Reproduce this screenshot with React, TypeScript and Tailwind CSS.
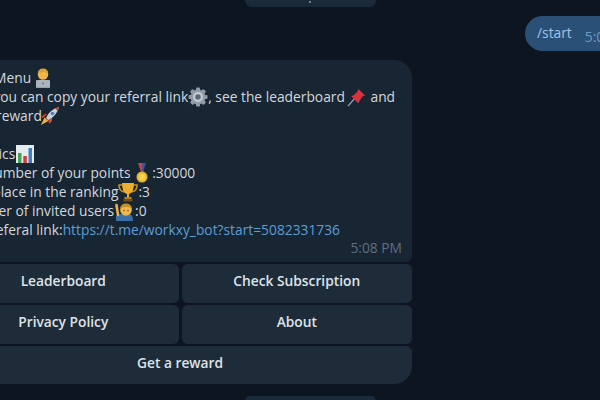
import React from 'react';

const emojiClass = 'inline-block w-[20px] h-[20px] -my-[4px] align-[-1px]';

const Technologist = () => (
  <svg viewBox="0 0 20 20" className={`${emojiClass} ml-[-2px]`}>
    <path d="M3 20 V15 Q3 12 7 12 H13 Q17 12 17 15 V20 Z" fill="#7d8d9b" />
    <circle cx="10" cy="6.500" r="5.200" fill="#f0b64c" />
    <path d="M4.800 6 Q4.800 0.500 10 0.500 Q15.200 0.500 15.200 6 Q12.500 4 10 4 Q7.500 4 4.800 6Z" fill="#d9a13a" />
    <rect x="3" y="12" width="14" height="7.500" rx="1" fill="#a9b4bd" />
    <circle cx="10" cy="15.500" r="1" fill="#6f7c88" />
  </svg>
);

const Gear = () => (
  <svg viewBox="0 0 20 20" className={emojiClass}>
    <g fill="#8f9ba5">
      <circle cx="10" cy="10" r="7.500" />
      <rect x="8" y="0.500" width="4" height="19" rx="1" />
      <rect x="8" y="0.500" width="4" height="19" rx="1" transform="rotate(45 10 10)" />
      <rect x="8" y="0.500" width="4" height="19" rx="1" transform="rotate(90 10 10)" />
      <rect x="8" y="0.500" width="4" height="19" rx="1" transform="rotate(135 10 10)" />
    </g>
    <circle cx="10" cy="10" r="5" fill="#c4ccd2" />
    <circle cx="10" cy="10" r="2.800" fill="#5d6a76" />
  </svg>
);

const Pin = () => (
  <svg viewBox="0 0 20 20" className={`${emojiClass} ml-[2px]`}>
    <path d="M1 19 L8.500 10.500" stroke="#8a97a3" strokeWidth="1.400" />
    <path d="M11.500 2 L18 8.500 L15.500 9.500 L12.500 14 Q12.500 15.500 11 16 L4.500 9.500 Q5.500 8 7 8 L10.500 4.500 Z" fill="#d8333c" />
  </svg>
);

const Rocket = () => (
  <svg viewBox="0 0 20 20" className={`${emojiClass} ml-[-2px]`}>
    <path d="M1 19 L4.500 11.500 L8.500 15 Z" fill="#f2b233" />
    <path d="M3 12 L7 8 L5 8 L1 11 Z M8 13 L12 9 L12 15 L9 18Z" fill="#d8452f" />
    <path d="M6 12 Q9 4 19 1 Q16 11 8 14 Z" fill="#c9d0d6" />
    <path d="M19 1 Q17.500 1.500 15 2.500 L17.500 5 Q18.500 3 19 1Z" fill="#d8452f" />
    <circle cx="12.500" cy="7.500" r="1.800" fill="#4e85b8" />
  </svg>
);

const Chart = () => (
  <svg viewBox="0 0 20 20" className={emojiClass}>
    <rect x="1" y="1" width="18" height="18" fill="#e6ebee" />
    <rect x="3" y="9" width="3.500" height="10" fill="#3fa35a" />
    <rect x="8.300" y="12" width="3.500" height="7" fill="#cf3b3b" />
    <rect x="13.500" y="4" width="3.500" height="15" fill="#3d7fc4" />
  </svg>
);

const Medal = () => (
  <svg viewBox="0 0 20 20" className={`${emojiClass} ml-[-2px]`}>
    <path d="M6 0 H10 L11.500 9 H9 Z" fill="#c9463f" />
    <path d="M14 0 H10 L9.500 9 H11 Z" fill="#46549f" />
    <circle cx="10" cy="14" r="5.500" fill="#e8b72f" />
    <circle cx="10" cy="14" r="3.200" fill="#f5d253" />
  </svg>
);

const Trophy = () => (
  <svg viewBox="0 0 20 20" className={emojiClass}>
    <path d="M4.500 3 H1 Q1 9 6 10 M15.500 3 H19 Q19 9 14 10" fill="none" stroke="#c98f22" strokeWidth="1.600" />
    <path d="M4 1 H16 Q16 11 11 12 V15 H9 V12 Q4 11 4 1Z" fill="#ecae2c" />
    <rect x="6.500" y="15" width="7" height="2" fill="#b97f1f" />
    <rect x="5.500" y="17" width="9" height="2.500" fill="#74491c" />
  </svg>
);

const RaisingHand = () => (
  <svg viewBox="0 0 20 20" className={`${emojiClass} ml-[1px]`}>
    <path d="M1 20 V16 Q1 13 6 13 H14 Q18 13 18 20 Z" fill="#3d6fa8" />
    <path d="M3 14 L1.500 4" stroke="#eab04a" strokeWidth="2.600" strokeLinecap="round" />
    <circle cx="11" cy="9" r="5.800" fill="#eeb84e" />
    <path d="M5 8 Q5.500 2.500 11 2.500 Q16.500 2.500 17 8 Q14 5.500 11 6 Q7.500 6 5 8Z" fill="#c98f2e" />
    <circle cx="9" cy="9.500" r="0.700" fill="#5a3a14" />
    <circle cx="13" cy="9.500" r="0.700" fill="#5a3a14" />
  </svg>
);

const KeyboardButton = ({ label, rounded = 'rounded-md' }: { label: string; rounded?: string }) => (
  <button className={`flex-1 min-w-0 flex items-center justify-center pb-[5px] bg-[#1e2c3a] text-[#dfe3e7] font-semibold text-[13.75px] ${rounded}`}>
    {label}
  </button>
);

const Line = ({ children }: { children: React.ReactNode }) => (
  <p className="h-[19px] whitespace-nowrap">{children}</p>
);

export default function App() {
  return (
    <div
      className="w-[600px] h-[400px] overflow-hidden bg-[#0d1620] flex flex-col text-[13.8px] leading-[19px] text-[#d3d8dc]"
      style={{ fontFamily: '"Open Sans", "Noto Sans", sans-serif' }}
    >
      {/* date pill cut off by the top edge */}
      <div className="h-[7px] shrink-0 flex justify-center overflow-hidden">
        <div className="w-[131px] h-[7px] ml-[20px] bg-[#1b2a38] rounded-b-[9px] flex items-end justify-center">
          <span className="block w-[2px] h-[2px] mb-[4px] rounded-full bg-[#8d9aa5]" />
        </div>
      </div>

      {/* outgoing message */}
      <div className="h-[35px] mt-[9px] shrink-0 flex justify-end mr-[-48px]">
        <div className="w-[123px] bg-[#2a5078] rounded-[18px] pl-[12px] flex items-center gap-[13px] text-[#a2c4e4]">
          <span className="mt-[-3px]">/start</span>
          <span className="mt-[6px] text-[#6f9ac0]">5:08 PM</span>
        </div>
      </div>

      {/* bot message with its keyboard */}
      <div className="w-[464px] ml-[-52px] mt-[9px] shrink-0 flex flex-col gap-[2px]">
        <div className="bg-[#182533] rounded-t-[18px] rounded-b-md h-[201.5px] pl-[10.5px] pr-[10px] pt-[8px]">
          <Line>Main Menu <Technologist /></Line>
          <Line>Here you can copy your referral link<Gear />, see the leaderboard<Pin /> and</Line>
          <Line>Get a reward<Rocket /></Line>
          <Line>{' '}</Line>
          <Line>Statistics<Chart /></Line>
          <Line>The number of your points <Medal />:30000</Line>
          <Line>Your place in the ranking<Trophy />:3</Line>
          <Line>Number of invited users<RaisingHand />:0</Line>
          <p className="h-[19px] whitespace-nowrap ml-[-2px]">Your referal link:<span className="text-[#5a9fd8]">https://t.me/workxy_bot?start=5082331736</span></p>
          <p className="text-right text-[#5e6f7e] mt-[-1px]">5:08 PM</p>
        </div>
        <div className="h-[39px] flex gap-[3px]">
          <KeyboardButton label="Leaderboard" />
          <KeyboardButton label="Check Subscription" />
        </div>
        <div className="h-[39px] flex gap-[3px]">
          <KeyboardButton label="Privacy Policy" />
          <KeyboardButton label="About" />
        </div>
        <div className="h-[38px] flex">
          <KeyboardButton label="Get a reward" rounded="rounded-t-md rounded-b-[18px]" />
        </div>
      </div>

      {/* next date pill */}
      <div className="h-[5px] mt-[12.500px] shrink-0 flex justify-center">
        <div className="w-[131px] ml-[20px] bg-[#1b2a38] rounded-t-[9px]" />
      </div>
    </div>
  );
}
